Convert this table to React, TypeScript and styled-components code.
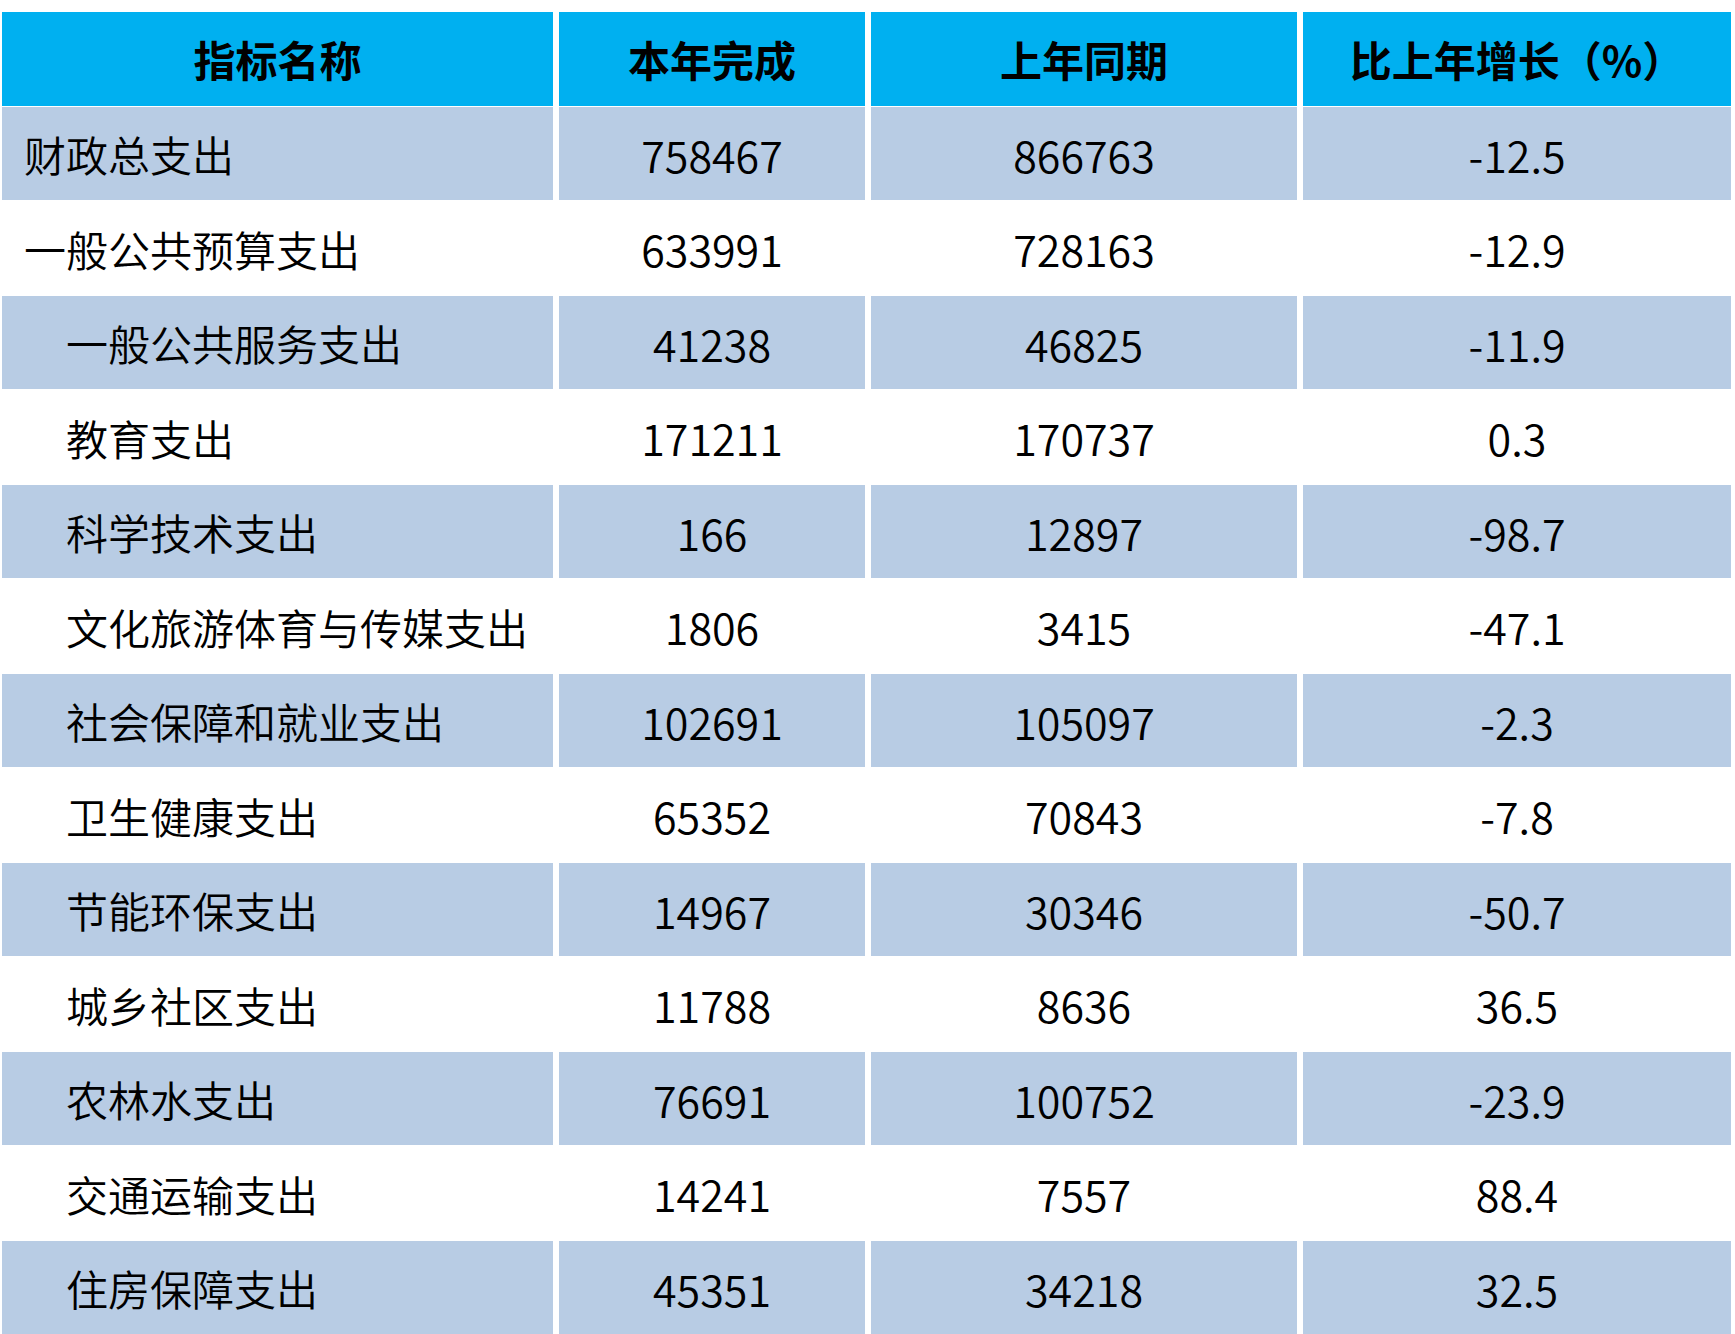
import styled, { createGlobalStyle } from 'styled-components'

const rows = [
  { name: '财政总支出', cur: '758467', prev: '866763', rate: '-12.5', indent: false },
  { name: '一般公共预算支出', cur: '633991', prev: '728163', rate: '-12.9', indent: false },
  { name: '一般公共服务支出', cur: '41238', prev: '46825', rate: '-11.9', indent: true },
  { name: '教育支出', cur: '171211', prev: '170737', rate: '0.3', indent: true },
  { name: '科学技术支出', cur: '166', prev: '12897', rate: '-98.7', indent: true },
  { name: '文化旅游体育与传媒支出', cur: '1806', prev: '3415', rate: '-47.1', indent: true },
  { name: '社会保障和就业支出', cur: '102691', prev: '105097', rate: '-2.3', indent: true },
  { name: '卫生健康支出', cur: '65352', prev: '70843', rate: '-7.8', indent: true },
  { name: '节能环保支出', cur: '14967', prev: '30346', rate: '-50.7', indent: true },
  { name: '城乡社区支出', cur: '11788', prev: '8636', rate: '36.5', indent: true },
  { name: '农林水支出', cur: '76691', prev: '100752', rate: '-23.9', indent: true },
  { name: '交通运输支出', cur: '14241', prev: '7557', rate: '88.4', indent: true },
  { name: '住房保障支出', cur: '45351', prev: '34218', rate: '32.5', indent: true },
]

export default function App() {
  return (
    <>
      <GlobalStyle />
      <Page>
        <Table>
          <Row>
            <HeadCell>指标名称</HeadCell>
            <HeadCell>本年完成</HeadCell>
            <HeadCell>上年同期</HeadCell>
            <HeadCell>比上年增长（%）</HeadCell>
          </Row>
          {rows.map((r, i) => (
            <Row key={r.name}>
              <NameCell $shaded={i % 2 === 0} $indent={r.indent}>
                {r.name}
              </NameCell>
              <NumCell $shaded={i % 2 === 0}>{r.cur}</NumCell>
              <NumCell $shaded={i % 2 === 0}>{r.prev}</NumCell>
              <NumCell $shaded={i % 2 === 0}>{r.rate}</NumCell>
            </Row>
          ))}
        </Table>
      </Page>
    </>
  )
}

const GlobalStyle = createGlobalStyle`
  body {
    margin: 0;
    background: #ffffff;
    font-family: 'Noto Sans CJK SC', 'Noto Sans', sans-serif;
  }
`

const Page = styled.div`
  padding: 12px 0 0 2px;
`

const Table = styled.div`
  display: flex;
  flex-direction: column;
  gap: 1px;
  width: 1729px;
`

const Row = styled.div`
  display: grid;
  grid-template-columns: 551px 306px 426px 428px;
  column-gap: 6px;
  height: 93.5px;
`

const Cell = styled.div<{ $shaded?: boolean }>`
  display: flex;
  align-items: center;
  padding-top: 2px;
  background: ${(p) => (p.$shaded ? '#b8cce4' : '#ffffff')};
  color: #000000;
  font-size: 42px;
  font-weight: 350;
  line-height: 1;
  white-space: nowrap;
`

const HeadCell = styled(Cell)`
  justify-content: center;
  padding-top: 0;
  background: #00b0f0;
  font-weight: 700;
`

const NameCell = styled(Cell)<{ $indent?: boolean }>`
  padding-left: ${(p) => (p.$indent ? '64px' : '22px')};
`

const NumCell = styled(Cell)`
  justify-content: center;
  font-size: 43px;
`
